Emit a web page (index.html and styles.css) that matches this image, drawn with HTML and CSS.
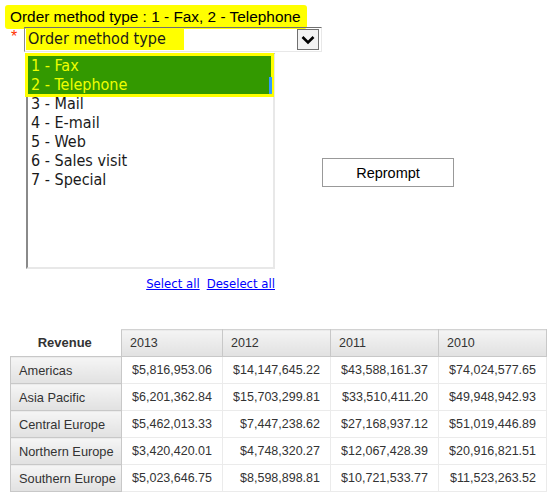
FILE: index.html
```html
<!DOCTYPE html>
<html lang="en">
<head>
    <meta charset="UTF-8">
    <title>Order method prompt</title>
    <link rel="stylesheet" href="styles.css">
</head>
<body>
<div class="prompt">
    <div class="prompt-left">
        <div class="title"><span class="hl">Order method type : 1 - Fax, 2 - Telephone</span></div>
        <div class="select-row">
            <span class="req">*</span>
            <div class="select">
                <span class="select-text">Order method type</span>
                <span class="select-btn">
                    <svg width="14" height="10" viewBox="0 0 14 10"><path d="M1.5 2 L7 7.5 L12.5 2" fill="none" stroke="#000" stroke-width="2.6"/></svg>
                </span>
            </div>
        </div>
        <div class="listbox">
            <div class="picked">
                <div class="opt">1 - Fax</div>
                <div class="opt">2 - Telephone</div>
                <span class="scroll-mark"></span>
            </div>
            <div class="opt">3 - Mail</div>
            <div class="opt">4 - E-mail</div>
            <div class="opt">5 - Web</div>
            <div class="opt">6 - Sales visit</div>
            <div class="opt">7 - Special</div>
        </div>
        <div class="links">
            <a href="#">Select all</a>
            <a href="#">Deselect all</a>
        </div>
    </div>
    <div class="prompt-right">
        <button class="reprompt">Reprompt</button>
    </div>
</div>

<table class="crosstab">
    <tr>
        <th class="corner">Revenue</th>
        <th class="year">2013</th>
        <th class="year">2012</th>
        <th class="year">2011</th>
        <th class="year">2010</th>
    </tr>
    <tr>
        <th class="region">Americas</th>
        <td>$5,816,953.06</td>
        <td>$14,147,645.22</td>
        <td>$43,588,161.37</td>
        <td>$74,024,577.65</td>
    </tr>
    <tr>
        <th class="region">Asia Pacific</th>
        <td>$6,201,362.84</td>
        <td>$15,703,299.81</td>
        <td>$33,510,411.20</td>
        <td>$49,948,942.93</td>
    </tr>
    <tr>
        <th class="region">Central Europe</th>
        <td>$5,462,013.33</td>
        <td>$7,447,238.62</td>
        <td>$27,168,937.12</td>
        <td>$51,019,446.89</td>
    </tr>
    <tr>
        <th class="region">Northern Europe</th>
        <td>$3,420,420.01</td>
        <td>$4,748,320.27</td>
        <td>$12,067,428.39</td>
        <td>$20,916,821.51</td>
    </tr>
    <tr>
        <th class="region">Southern Europe</th>
        <td>$5,023,646.75</td>
        <td>$8,598,898.81</td>
        <td>$10,721,533.77</td>
        <td>$11,523,263.52</td>
    </tr>
</table>
</body>
</html>
```

FILE: styles.css
```css
* {
    margin: 0;
    padding: 0;
    box-sizing: border-box;
}
body {
    background: #fff;
    font-family: "Liberation Sans", Arial, sans-serif;
    color: #000;
    padding: 8px 0 0 10px;
}
.prompt {
    display: flex;
    height: 321px;
}
.prompt-left {
    width: 312px;
}
.title {
    font-size: 15.4px;
    line-height: 18px;
    height: 19px;
}
.title .hl {
    background: #ffff00;
    padding: 3px 6px 4px 5px;
    margin-left: -5px;
    border-radius: 3px;
}
.select-row {
    display: flex;
    align-items: flex-start;
    height: 26px;
}
.req {
    color: #ff3300;
    font-size: 16px;
    width: 14px;
    padding: 2px 0 0 1px;
    line-height: 16px;
}
.select {
    display: flex;
    align-items: center;
    justify-content: space-between;
    width: 298px;
    height: 25px;
    border: 1px solid #8a8a8a;
    border-top-color: #707070;
    border-right-color: #e8e8e8;
    border-bottom-color: #e8e8e8;
    padding: 1px 2px 1px 1px;
}
.select-text {
    font-family: "DejaVu Sans Condensed", "DejaVu Sans", sans-serif;
    font-size: 16px;
    background: #ffff00;
    height: 21px;
    line-height: 20px;
    padding: 0 18px 0 2px;
    color: #1a1a1a;
}
.select-btn {
    display: flex;
    align-items: center;
    justify-content: center;
    width: 22px;
    height: 21px;
    border: 1px solid #707070;
    background: #f2f2f2;
}
.listbox {
    width: 249px;
    height: 216px;
    margin-left: 16px;
    border: 2px solid #e8e8e8;
    border-left-color: #8a8a8a;
    border-top-color: #9a9a9a;
    font-family: "DejaVu Sans Condensed", "DejaVu Sans", sans-serif;
    font-size: 16px;
    color: #1a1a1a;
    padding-top: 1px;
}
.opt {
    height: 19px;
    line-height: 19px;
    padding-left: 3px;
}
.picked {
    position: relative;
    background: #339900;
    color: #eeff00;
    margin-right: 2px;
    box-shadow: 0 0 0 3px #ffff00;
}
.scroll-mark {
    position: absolute;
    right: -1px;
    top: 21px;
    width: 3px;
    height: 17px;
    background: #3399ff;
}
.links {
    display: flex;
    justify-content: flex-end;
    gap: 7px;
    padding: 7px 0 0 0;
    width: 265px;
    font-family: "DejaVu Sans Condensed", "DejaVu Sans", sans-serif;
    font-size: 13px;
}
.links a {
    color: #0000ff;
}
.prompt-right {
    padding: 150px 0 0 0;
}
.reprompt {
    width: 132px;
    height: 29px;
    background: #fff;
    border: 1px solid #999;
    font-family: "Liberation Sans", Arial, sans-serif;
    font-size: 14.5px;
    color: #000;
}
.crosstab {
    width: 536px;
    border-collapse: collapse;
    font-family: "Liberation Sans", Arial, sans-serif;
    font-size: 12.5px;
    color: #333;
    table-layout: fixed;
}
.crosstab th,
.crosstab td {
    height: 27px;
    padding: 0 10px 0 8px;
    text-align: left;
    font-weight: normal;
    white-space: nowrap;
    overflow: hidden;
}
.crosstab .corner {
    width: 111px;
    font-weight: bold;
    font-size: 13px;
    text-align: center;
    background: #fff;
}
.crosstab .year {
    background: linear-gradient(#f4f4f4, #e1e1e1);
    border: 1px solid #c8c8c8;
    border-top-color: #d2d2d2;
}
.crosstab .year:nth-child(2) { width: 101px; }
.crosstab .year:nth-child(3) { width: 108px; }
.crosstab .year:nth-child(4) { width: 108px; }
.crosstab .year:nth-child(5) { width: 108px; }
.crosstab .region {
    font-size: 12.8px;
    padding: 0 2px 0 8px;
    background: linear-gradient(#f5f5f5, #e1e1e1);
    border: 1px solid #c8c8c8;
}
.crosstab td {
    border: 1px solid #ebebeb;
    text-align: right;
}
```
